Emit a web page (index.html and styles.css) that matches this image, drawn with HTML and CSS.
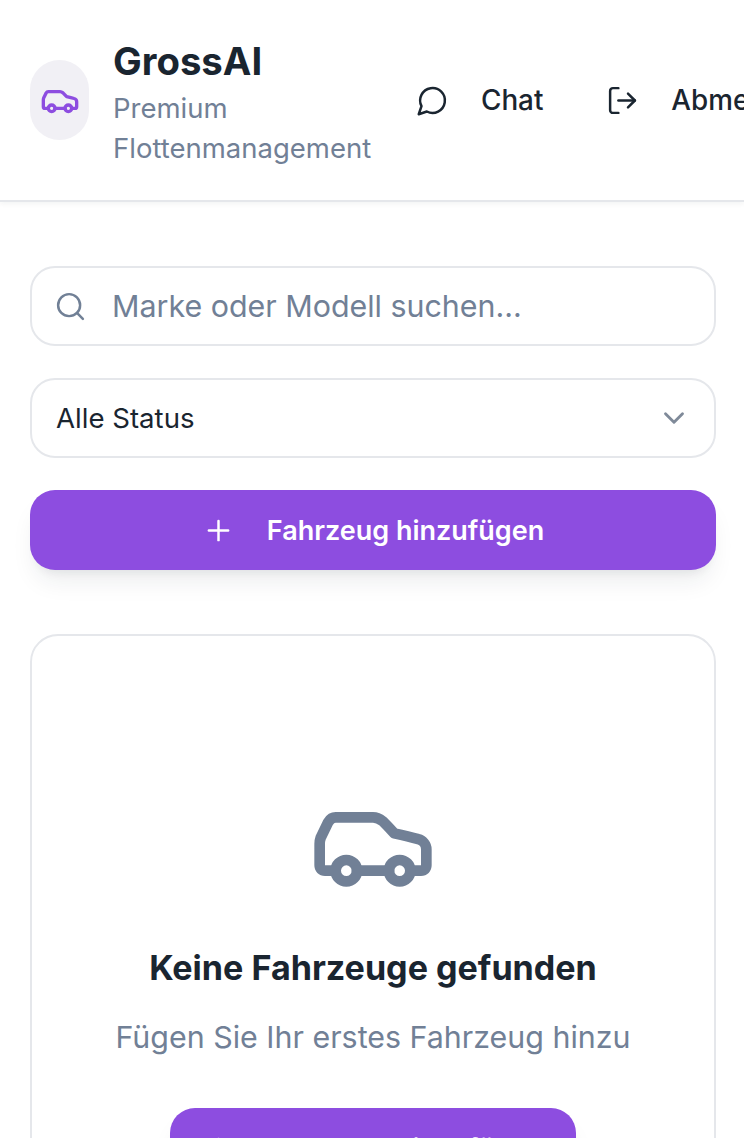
FILE: index.html
```html
<!DOCTYPE html>
<html lang="de">
<head>
<meta charset="utf-8">
<title>GrossAI</title>
<link rel="stylesheet" href="styles.css">
</head>
<body>
<header class="topbar">
  <div class="brand">
    <div class="logo">
      <svg class="icon-logo" viewBox="0 0 24 24"><path d="M19 17h2c.6 0 1-.4 1-1v-3c0-.9-.7-1.7-1.5-1.9C18.7 10.6 16 10 16 10s-1.3-1.4-2.2-2.3c-.5-.4-1.1-.7-1.8-.7H5c-.6 0-1.1.4-1.4.9l-1.4 2.9A3.7 3.7 0 0 0 2 12v4c0 .6.4 1 1 1h2"/><circle cx="7" cy="17" r="2"/><path d="M9 17h6"/><circle cx="17" cy="17" r="2"/></svg>
    </div>
    <div class="brand-text">
      <div class="brand-title">GrossAI</div>
      <div class="brand-sub">Premium Flottenmanagement</div>
    </div>
  </div>
  <nav class="nav">
    <a class="nav-item"><svg class="icon-33" viewBox="0 0 24 24"><path d="M7.9 20A9 9 0 1 0 4 16.1L2 22Z"/></svg><span>Chat</span></a>
    <a class="nav-item"><svg class="icon-33" viewBox="0 0 24 24"><path d="M9 21H5a2 2 0 0 1-2-2V5a2 2 0 0 1 2-2h4"/><polyline points="16 17 21 12 16 7"/><line x1="21" y1="12" x2="9" y2="12"/></svg><span>Abmelden</span></a>
  </nav>
</header>
<main class="content">
  <div class="field">
    <svg class="icon-33 icon-search" viewBox="0 0 24 24"><circle cx="11" cy="11" r="8"/><path d="m21 21-4.3-4.3"/></svg>
    <span class="placeholder">Marke oder Modell suchen...</span>
  </div>
  <div class="field field-select">
    <span>Alle Status</span>
    <svg class="icon-chevron" viewBox="0 0 24 24"><path d="m6 9 6 6 6-6"/></svg>
  </div>
  <button class="btn btn-wide"><svg class="icon-33" viewBox="0 0 24 24"><path d="M5 12h14"/><path d="M12 5v14"/></svg><span>Fahrzeug hinzufügen</span></button>
  <section class="empty">
    <svg class="icon-empty" viewBox="0 0 24 24"><path d="M19 17h2c.6 0 1-.4 1-1v-3c0-.9-.7-1.7-1.5-1.9C18.7 10.6 16 10 16 10s-1.3-1.4-2.2-2.3c-.5-.4-1.1-.7-1.8-.7H5c-.6 0-1.1.4-1.4.9l-1.4 2.9A3.7 3.7 0 0 0 2 12v4c0 .6.4 1 1 1h2"/><circle cx="7" cy="17" r="2"/><path d="M9 17h6"/><circle cx="17" cy="17" r="2"/></svg>
    <h2 class="empty-title">Keine Fahrzeuge gefunden</h2>
    <p class="empty-sub">Fügen Sie Ihr erstes Fahrzeug hinzu</p>
    <button class="btn btn-inline"><svg class="icon-33" viewBox="0 0 24 24"><path d="M5 12h14"/><path d="M12 5v14"/></svg><span>Fahrzeug hinzufügen</span></button>
  </section>
</main>
</body>
</html>
```
FILE: styles.css
```css
* { box-sizing: border-box; }
html, body { margin: 0; height: 100%; overflow: hidden; background: #fff; }
body { font-family: Inter, "Liberation Sans", sans-serif; color: #1a2530; width: 744px; }
svg { fill: none; stroke: currentColor; stroke-width: 2; stroke-linecap: round; stroke-linejoin: round; flex: none; display: block; }
.topbar { height: 202px; display: flex; align-items: center; padding: 0 0 0 30px; border-bottom: 2px solid #e5e7eb; box-shadow: 0 2px 5px rgba(26, 37, 48, 0.05); overflow: hidden; gap: 41px; }
.brand { display: flex; align-items: center; gap: 24px; flex: none; }
.logo { width: 59px; height: 80px; border-radius: 30px; background: #f1f0f5; display: flex; align-items: center; justify-content: center; color: #8d4de0; }
.icon-logo { width: 40px; height: 40px; }
.brand-text { width: 262px; padding-top: 2px; }
.brand-title { font-size: 38.3px; font-weight: 700; line-height: 52px; }
.brand-sub { font-size: 27.5px; line-height: 40px; color: #718096; margin-top: 1px; }
.nav { display: flex; align-items: center; gap: 63px; flex: none; }
.nav-item { display: flex; align-items: center; gap: 32px; font-size: 27.8px; font-weight: 500; }
.icon-33 { width: 33px; height: 33px; stroke-width: 1.8; }
.content { padding: 64px 28px 0 30px; display: flex; flex-direction: column; gap: 32px; }
.field { height: 80px; border: 2px solid #e5e7eb; border-radius: 25px; display: flex; align-items: center; font-size: 27.6px; background: #fff; }
.icon-search { color: #718096; margin-left: 22px; }
.placeholder { color: #718096; margin-left: 25px; font-size: 30.4px; }
.field-select { justify-content: space-between; padding: 0 25px 0 24px; }
.icon-chevron { width: 34px; height: 34px; color: #7f8a99; margin-right: -2px; }
.btn { border: 0; background: #8d4de0; color: #fff; font-family: inherit; font-size: 27px; font-weight: 600; display: flex; align-items: center; justify-content: center; gap: 32px; height: 80px; border-radius: 25px; box-shadow: 0 16px 25px -5px rgba(26, 37, 48, 0.08), 0 8px 10px -6px rgba(26, 37, 48, 0.08); }
.empty { margin-top: 32px; height: 700px; border: 2px solid #e5e7eb; border-radius: 28px; display: flex; flex-direction: column; align-items: center; padding-top: 144px; }
.icon-empty { width: 128px; height: 128px; color: #718096; }
.empty-title { margin: 30px 0 0; font-size: 34.1px; line-height: 60px; font-weight: 700; }
.empty-sub { margin: 17px 0 0; font-size: 30.4px; line-height: 45px; color: #718096; }
.btn-inline { margin-top: 48px; width: 406px; flex: none; }
```
